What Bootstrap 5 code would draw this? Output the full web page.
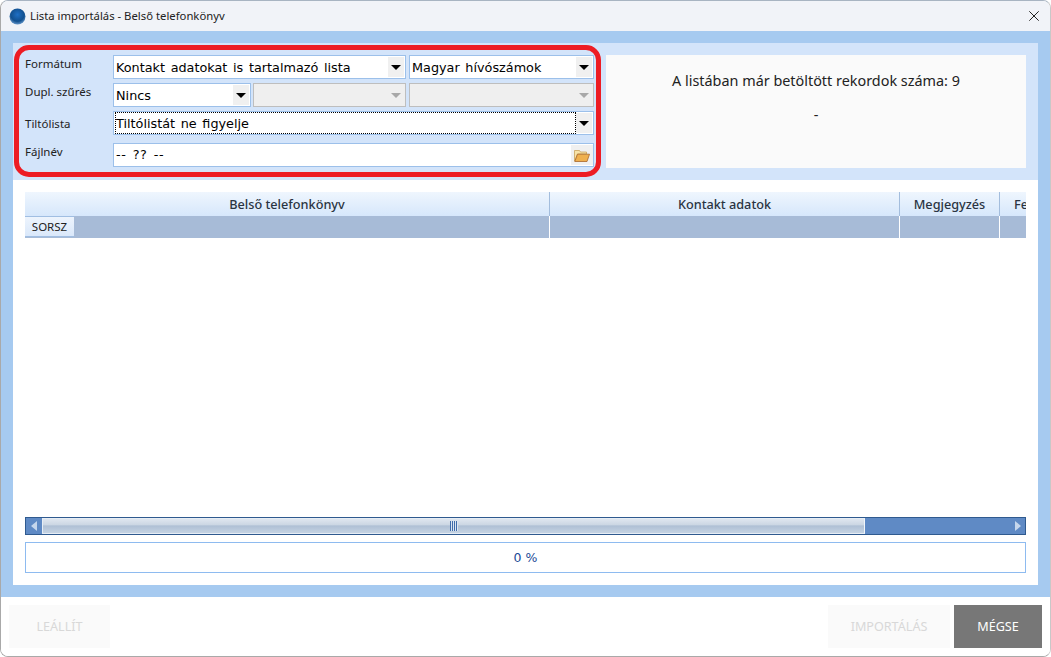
<!DOCTYPE html>
<html lang="hu">
<head>
<meta charset="utf-8">
<title>Lista importálás - Belső telefonkönyv</title>
<link rel="stylesheet" href="https://cdn.jsdelivr.net/npm/bootstrap@5.3.0/dist/css/bootstrap.min.css">
<style>
html,body{height:100%;margin:0;background:#fff;overflow:hidden}
body{font-family:"Noto Sans","Open Sans",sans-serif;font-size:12px;color:#222}
.win{width:1051px;height:657px;border:1px solid #a9a9a9;border-right-color:#c8c8c8;border-top-color:#a8b4c2;border-radius:8px 8px 8px 8px;overflow:hidden;background:#fff}
.ttl{height:30px;background:#f1f3f8;flex:none;padding-left:8px;gap:4px}
.ttl-txt{font-size:11.3px;color:#222}
.closer{margin-right:11px}
.mid{background:#a6caf0;padding:12px 12px 12px 12px;flex:1 1 auto;min-height:0}
.toparea{background:#d3e4fa;height:137px;padding:12px 12px 0 12px;gap:12px;position:relative}
.frm{width:569px;flex:none}
.frow{height:24px;margin-bottom:4px}
.frow.wide{margin-bottom:8px}
.lbl{width:88px;flex:none;font-size:11.5px;color:#222;line-height:18px;align-self:flex-start}
.lbl.low{padding-top:4px}
.combo{height:24px;background:#fff;border:1px solid #9cc0ea;font-family:"DejaVu Sans",sans-serif;font-size:12.8px;word-spacing:1.6px;color:#000;padding-left:2px;line-height:23px;white-space:nowrap;overflow:hidden;flex:none}
.c-a{width:293px}.c-b{width:185px;margin-left:3px}.c-n{width:138px}.c-d1{width:153px;margin-left:2px}
.c-full{flex:1 1 auto;width:auto}
.combo.off{background:#efefef;border-color:#bebebe}
.arr{width:16px;height:20px;background:#f0f0f0;margin:1px 1px 1px 0;flex:none}
.arr::after{content:"";border-left:5px solid transparent;border-right:5px solid transparent;border-top:5px solid #000}
.off .arr::after{border-top-color:#a8a8a8}
.off .arr{background:#efefef}
.dots{border:1px dotted #000;height:22px;line-height:21px;margin-left:-1px;padding-left:0}
.fname{letter-spacing:.6px;line-height:21px}
.fold{width:22px;height:20px;background:#f0f0f0;margin:1px 0 1px 0;flex:none}
.infobox{background:#fafafa;height:113px;width:420px;flex:none;font-size:14.4px;color:#222;padding-top:15px}
.infobox p{margin:0;line-height:22px}
.infobox p+p{margin-top:12px}
.ring{position:absolute;left:1px;top:2px;width:587px;height:132px;border:5px solid #ed1c24;border-radius:15px;pointer-events:none}
.work{background:#fff;height:405px;padding:12px 12px 12px 12px}
.grid-h,.grid-s{display:grid;grid-template-columns:525px 350px 100px 1fr}
.grid-h{height:24px;background:linear-gradient(#eff6fe,#d6e7fb);font-size:12.7px;font-weight:500;color:#2a3442;line-height:25px}
.grid-h>div{border-right:1px solid #a3bddd;white-space:nowrap;overflow:hidden}
.grid-h>div:last-child{border:0;padding-left:14px}
.grid-s{height:22px;background:#a7bbd7}
.grid-s>div{border-right:1px solid #fff}
.grid-s>div:last-child{border:0}
.sorsz{width:49px;height:21px;background:linear-gradient(#edf4fd,#dae8fa);border-top:1px solid #a0bee2;border-bottom:1px solid #a0bee2;font-size:11.5px;color:#222;line-height:19px;text-align:center}
.spacer{height:279px}
.sbar{height:18px;background:#5f8ac5;border:1px solid #2f5a8f}
.sbtn{width:16px;flex:none}
.thumb{width:823px;flex:none;background:linear-gradient(#dfe6ef 0,#ccd7e4 40%,#afc0d5 50%,#c5d3e3 100%);border:1px solid #e6edf5;border-right-color:#f2f6fa}
.grip{width:8px;height:10px;background:repeating-linear-gradient(90deg,#3f6cab 0,#3f6cab 1px,#dbe5f1 1px,#dbe5f1 2px)}
.prog{height:31px;margin-top:7px;border:1px solid #8ebbf0;font-family:"DejaVu Sans",sans-serif;font-size:12.5px;color:#1c4a96;line-height:29px}
.foot{height:59px;flex:none;padding:8px 8px 8px 8px;background:#fff}
.act{height:43px;border:0;border-radius:0;font-size:12.6px;padding:1px 0 0;--bs-btn-disabled-opacity:1}
.act:disabled{background:#fafafa;color:#d8d8d8}
.act-l{width:101px}.act-i{width:122px;margin-right:4px}.act-m{width:88px;background:#777;color:#fff}
.act-m:hover{background:#777;color:#fff}
</style>
</head>
<body>
<div class="win d-flex flex-column">
  <div class="ttl d-flex align-items-center">
    <svg width="17" height="17" viewBox="0 0 17 17" aria-hidden="true"><defs><radialGradient id="gl" cx="50%" cy="38%" r="60%"><stop offset="0" stop-color="#1f6fc4"/><stop offset=".7" stop-color="#12508f"/><stop offset="1" stop-color="#5b8fc4"/></radialGradient></defs><circle cx="8.5" cy="8.5" r="8" fill="url(#gl)"/></svg>
    <span class="ttl-txt flex-grow-1">Lista importálás - Belső telefonkönyv</span>
    <svg class="closer" width="10" height="10" viewBox="0 0 10 10" aria-label="Bezárás"><path d="M.3.3l9.4 9.4M9.7.3L.3 9.7" stroke="#222" stroke-width="1" fill="none"/></svg>
  </div>
  <div class="mid">
    <div class="toparea d-flex">
      <div class="frm">
        <div class="frow d-flex">
          <div class="lbl">Formátum</div>
          <div class="d-flex flex-grow-1">
            <div class="combo c-a d-flex"><span class="flex-grow-1">Kontakt adatokat is tartalmazó lista</span><span class="arr d-flex align-items-center justify-content-center"></span></div>
            <div class="combo c-b d-flex"><span class="flex-grow-1">Magyar hívószámok</span><span class="arr d-flex align-items-center justify-content-center"></span></div>
          </div>
        </div>
        <div class="frow d-flex">
          <div class="lbl">Dupl. szűrés</div>
          <div class="d-flex flex-grow-1">
            <div class="combo c-n d-flex"><span class="flex-grow-1">Nincs</span><span class="arr d-flex align-items-center justify-content-center"></span></div>
            <div class="combo off c-d1 d-flex"><span class="flex-grow-1"></span><span class="arr d-flex align-items-center justify-content-center"></span></div>
            <div class="combo off c-b d-flex"><span class="flex-grow-1"></span><span class="arr d-flex align-items-center justify-content-center"></span></div>
          </div>
        </div>
        <div class="frow wide d-flex">
          <div class="lbl low">Tiltólista</div>
          <div class="combo c-full d-flex"><span class="flex-grow-1 dots">Tiltólistát ne figyelje</span><span class="arr d-flex align-items-center justify-content-center"></span></div>
        </div>
        <div class="frow d-flex">
          <div class="lbl">Fájlnév</div>
          <div class="combo c-full d-flex"><span class="flex-grow-1 fname">-- ?? --</span><span class="fold d-flex align-items-center justify-content-center">
            <svg width="16" height="13" viewBox="0 0 16 13" aria-hidden="true"><path d="M.5 12V1.5h5l1 1.5h6v2H3.5L.8 12z" fill="#f7e3a8" stroke="#c9a25a" stroke-width=".8"/><path d="M.8 12.5L3.5 5.2h12L13 12.5z" fill="#efb04e" stroke="#a8662a" stroke-width=".8"/></svg></span></div>
        </div>
      </div>
      <div class="infobox text-center">
        <p>A listában már betöltött rekordok száma: 9</p>
        <p>-</p>
      </div>
      <div class="ring"></div>
    </div>
    <div class="work">
      <div class="grid-h text-center">
        <div>Belső telefonkönyv</div>
        <div>Kontakt adatok</div>
        <div>Megjegyzés</div>
        <div class="text-start">Fe</div>
      </div>
      <div class="grid-s">
        <div><div class="sorsz">SORSZ</div></div><div></div><div></div><div></div>
      </div>
      <div class="spacer"></div>
      <div class="sbar d-flex">
        <div class="sbtn d-flex align-items-center justify-content-center"><svg width="6" height="10" viewBox="0 0 6 10" aria-hidden="true"><path d="M6 0v10L0 5z" fill="#c5d6ec"/></svg></div>
        <div class="thumb d-flex align-items-center justify-content-center"><div class="grip"></div></div>
        <div class="flex-grow-1 d-flex align-items-center justify-content-end pe-1"><svg width="6" height="10" viewBox="0 0 6 10" aria-hidden="true"><path d="M0 0v10l6-5z" fill="#c5d6ec"/></svg></div>
      </div>
      <div class="prog text-center">0 %</div>
    </div>
  </div>
  <div class="foot d-flex">
    <button class="btn act act-l" disabled>LEÁLLÍT</button>
    <div class="flex-grow-1"></div>
    <button class="btn act act-i" disabled>IMPORTÁLÁS</button>
    <button class="btn act act-m">MÉGSE</button>
  </div>
</div>
<script src="https://cdn.jsdelivr.net/npm/bootstrap@5.3.0/dist/js/bootstrap.bundle.min.js"></script>
</body>
</html>
